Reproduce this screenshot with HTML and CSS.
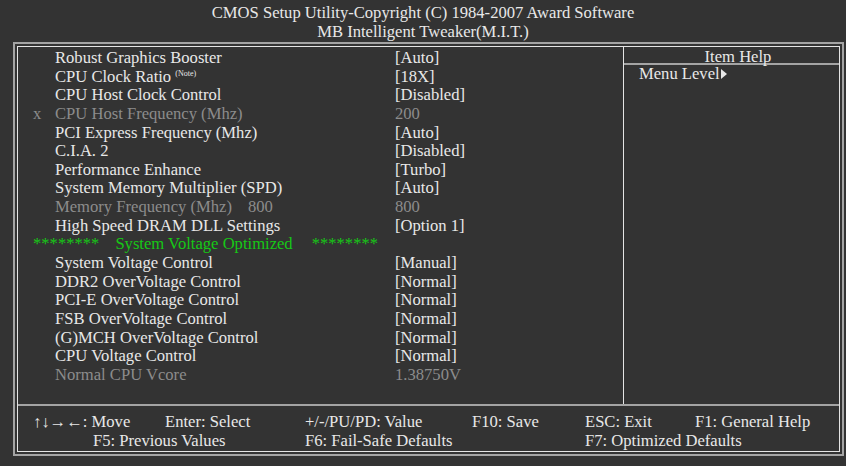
FILE: index.html
```html
<!DOCTYPE html>
<html>

<head>
    <title>MB Intelligent Tweaker(M.I.T.)</title>
    <link rel="stylesheet" href="styles.css">
</head>

<body>

    <div class="title">
        CMOS Setup Utility-Copyright (C) 1984-2007 Award Software<br>
        MB Intelligent Tweaker(M.I.T.)
    </div>

    <div class="frame">
        <div class="inner">
            <div class="main">
                <div class="items">
                    <span></span><span>Robust Graphics Booster</span><span>[Auto]</span>
                    <span></span><span>CPU Clock Ratio <sup class="note">(Note)</sup></span><span>[18X]</span>
                    <span></span><span>CPU Host Clock Control</span><span>[Disabled]</span>
                    <span class="dim">x</span><span class="dim">CPU Host Frequency (Mhz)</span><span class="dim">200</span>
                    <span></span><span>PCI Express Frequency (Mhz)</span><span>[Auto]</span>
                    <span></span><span>C.I.A. 2</span><span>[Disabled]</span>
                    <span></span><span>Performance Enhance</span><span>[Turbo]</span>
                    <span></span><span>System Memory Multiplier (SPD)</span><span>[Auto]</span>
                    <span></span><span class="dim">Memory Frequency (Mhz)<span class="gap">800</span></span><span class="dim">800</span>
                    <span></span><span>High Speed DRAM DLL Settings</span><span>[Option 1]</span>
                    <div class="section">
                        <span>********</span><span class="sec-title">System Voltage Optimized</span><span>********</span>
                    </div>
                    <span></span><span>System Voltage Control</span><span>[Manual]</span>
                    <span></span><span>DDR2 OverVoltage Control</span><span>[Normal]</span>
                    <span></span><span>PCI-E OverVoltage Control</span><span>[Normal]</span>
                    <span></span><span>FSB OverVoltage Control</span><span>[Normal]</span>
                    <span></span><span>(G)MCH OverVoltage Control</span><span>[Normal]</span>
                    <span></span><span>CPU Voltage Control</span><span>[Normal]</span>
                    <span></span><span class="dim">Normal CPU Vcore</span><span class="dim">1.38750V</span>
                </div>
                <div class="help">
                    <div class="help-head">Item Help</div>
                    <div class="help-body">Menu Level<svg class="tri" width="6" height="10" viewBox="0 0 6 10"><path d="M0 0 L6 5 L0 10 Z" fill="#e8e8e8"/></svg></div>
                </div>
            </div>
            <div class="footer">
                <span>↑↓→←: Move</span>
                <span>Enter: Select</span>
                <span>+/-/PU/PD: Value</span>
                <span>F10: Save</span>
                <span>ESC: Exit</span>
                <span>F1: General Help</span>
                <span class="f5">F5: Previous Values</span>
                <span class="f6">F6: Fail-Safe Defaults</span>
                <span class="f7">F7: Optimized Defaults</span>
            </div>
        </div>
    </div>

</body>

</html>
```

FILE: styles.css
```css
body {
    margin: 0;
    background: #333333;
    color: #e8e8e8;
    font-family: "Liberation Serif", "Times New Roman", serif;
    font-size: 16.6px;
    line-height: 18.65px;
}

.title {
    box-sizing: border-box;
    height: 42px;
    padding-top: 4px;
    text-align: center;
}

.frame {
    margin: 0 2px 0 13px;
    height: 414px;
    box-sizing: border-box;
    border: 2px solid #a4a4a4;
    padding: 2px;
}

.inner {
    height: 100%;
    box-sizing: border-box;
    border: 1px solid #e4e4e4;
    display: flex;
    flex-direction: column;
}

.main {
    display: flex;
    height: 358px;
}

.items {
    width: 605px;
    box-sizing: border-box;
    padding: 2px 0 0 15px;
    display: grid;
    grid-template-columns: 22px 340px 1fr;
    grid-auto-rows: 18.65px;
    align-content: start;
    white-space: nowrap;
}

.dim {
    color: #8c8c8c;
}

.note {
    font-size: 8px;
    line-height: 0;
    vertical-align: 6px;
}

.gap {
    margin-left: 16px;
}

.section {
    grid-column: 1 / 4;
    color: #16c816;
    display: flex;
}

.sec-title {
    margin: 0 19px 0 16px;
}

.help {
    flex: 1;
    border-left: 1px solid #e4e4e4;
}

.help-head {
    box-sizing: border-box;
    height: 18px;
    padding: 1px 0 0 13px;
    line-height: 17px;
    text-align: center;
    border-bottom: 2px solid #a4a4a4;
}

.help-body {
    padding-left: 15px;
}

.tri {
    margin-left: 1px;
}

.footer {
    flex: 1;
    border-top: 2px solid #a4a4a4;
    padding: 7px 0 0 15px;
    display: grid;
    grid-template-columns: 132px 140px 167px 113px 110px 1fr;
    grid-auto-rows: 19px;
    white-space: nowrap;
}

.f5 {
    grid-column: 1 / 3;
    padding-left: 60px;
}

.f6 {
    grid-column: 3 / 5;
}

.f7 {
    grid-column: 5 / 7;
}
```
